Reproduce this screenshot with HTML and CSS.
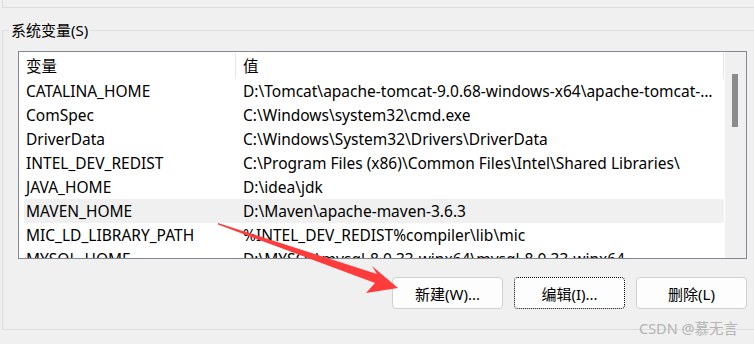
FILE: index.html
```html
<!DOCTYPE html>
<html lang="zh-CN">

<head>
    <meta charset="utf-8">
    <title>系统变量</title>
    <link rel="stylesheet" href="styles.css">
</head>

<body>
    <div class="user_group"></div>

    <fieldset class="sys_group">
        <legend>系统变量(S)</legend>

        <div class="listbox">
            <div class="table">
                <div class="row head">
                    <span class="col_name">变量</span>
                    <span class="col_val">值</span>
                </div>
                <div class="row"><span class="col_name">CATALINA_HOME</span><span class="col_val">D:\Tomcat\apache-tomcat-9.0.68-windows-x64\apache-tomcat-9.0.68</span></div>
                <div class="row"><span class="col_name">ComSpec</span><span class="col_val">C:\Windows\system32\cmd.exe</span></div>
                <div class="row"><span class="col_name">DriverData</span><span class="col_val">C:\Windows\System32\Drivers\DriverData</span></div>
                <div class="row"><span class="col_name">INTEL_DEV_REDIST</span><span class="col_val">C:\Program Files (x86)\Common Files\Intel\Shared Libraries\</span></div>
                <div class="row"><span class="col_name">JAVA_HOME</span><span class="col_val">D:\idea\jdk</span></div>
                <div class="row row_hover"><span class="col_name">MAVEN_HOME</span><span class="col_val">D:\Maven\apache-maven-3.6.3</span></div>
                <div class="row"><span class="col_name">MIC_LD_LIBRARY_PATH</span><span class="col_val">%INTEL_DEV_REDIST%compiler\lib\mic</span></div>
                <div class="row"><span class="col_name">MYSQL_HOME</span><span class="col_val">D:\MYSQL\mysql-8.0.33-winx64\mysql-8.0.33-winx64</span></div>
            </div>
            <div class="scrollbar">
                <div class="thumb"></div>
            </div>
        </div>

        <div class="buttons">
            <button class="btn">新建(W)...</button>
            <button class="btn btn_focus">编辑(I)...</button>
            <button class="btn">删除(L)</button>
        </div>
    </fieldset>

    <div class="watermark">CSDN @慕无言</div>

    <svg class="arrow" width="754" height="344" viewBox="0 0 754 344">
        <polygon fill="#ff3b3b" points="218,223 377,274 372,266 398,288 366,293 375,283 218,224.5"/>
    </svg>
</body>

</html>
```

FILE: styles.css
```css
* {
    box-sizing: border-box;
    margin: 0;
}

body {
    width: 754px;
    height: 344px;
    overflow: hidden;
    background: #f0f0f0;
    font-family: 'Noto Sans', 'Noto Sans CJK SC', sans-serif;
    font-size: 15.5px;
    color: #000;
    position: relative;
}

.user_group {
    height: 8px;
    margin-left: 2px;
    border-left: 1px solid #dcdcdc;
    border-bottom: 1px solid #dcdcdc;
}

.sys_group {
    margin: 12px -10px 0 2px;
    padding: 11px 18px 20px 15px;
    border: 1px solid #dcdcdc;
    min-width: 0;
}

.sys_group legend {
    margin-left: -9px;
    padding: 0 2px;
    line-height: 20px;
    font-size: 15px;
}

.listbox {
    display: flex;
    width: 729px;
    height: 208px;
    border: 1px solid #828790;
    background: #fff;
    overflow: hidden;
}

.table {
    width: 705px;
    padding-left: 5px;
}

.row {
    display: flex;
    height: 24px;
    line-height: 24px;
    white-space: nowrap;
}

.row.head {
    height: 27px;
    line-height: 27px;
}

.row_hover {
    background: #f0f0f0;
}

.col_name {
    width: 212px;
    flex: none;
    padding-left: 2px;
}

.col_val {
    flex: 1;
    padding-left: 7px;
    padding-right: 8px;
    overflow: hidden;
    text-overflow: ellipsis;
}

.head .col_name {
    border-right: 1px solid #e5e5e5;
    height: 26px;
    margin-top: 1px;
    line-height: 26px;
}

.head .col_val {
    border-right: 1px solid #e5e5e5;
    height: 26px;
    margin-top: 1px;
    line-height: 26px;
}

.scrollbar {
    width: 22px;
    flex: none;
    background: #f0f0f0;
    border-left: 1px solid #fff;
    padding: 22px 0 0 7px;
}

.thumb {
    width: 6px;
    height: 53px;
    background: #8b8b8b;
}

.buttons {
    display: flex;
    justify-content: flex-end;
    gap: 11px;
    width: 729px;
    margin-top: 18px;
}

.btn {
    width: 111px;
    height: 32px;
    border: 1px solid #d0d0d0;
    border-radius: 4px;
    background: #fdfdfd;
    font-family: 'Noto Sans', 'Noto Sans CJK SC', sans-serif;
    font-size: 15px;
    color: #000;
    padding: 0;
}

.btn_focus {
    border: 1px dotted #000;
}

.watermark {
    position: absolute;
    left: 639px;
    top: 318px;
    font-size: 14.5px;
    line-height: 20px;
    color: #b4b4b4;
}

.arrow {
    position: absolute;
    left: 0;
    top: 0;
}
```
